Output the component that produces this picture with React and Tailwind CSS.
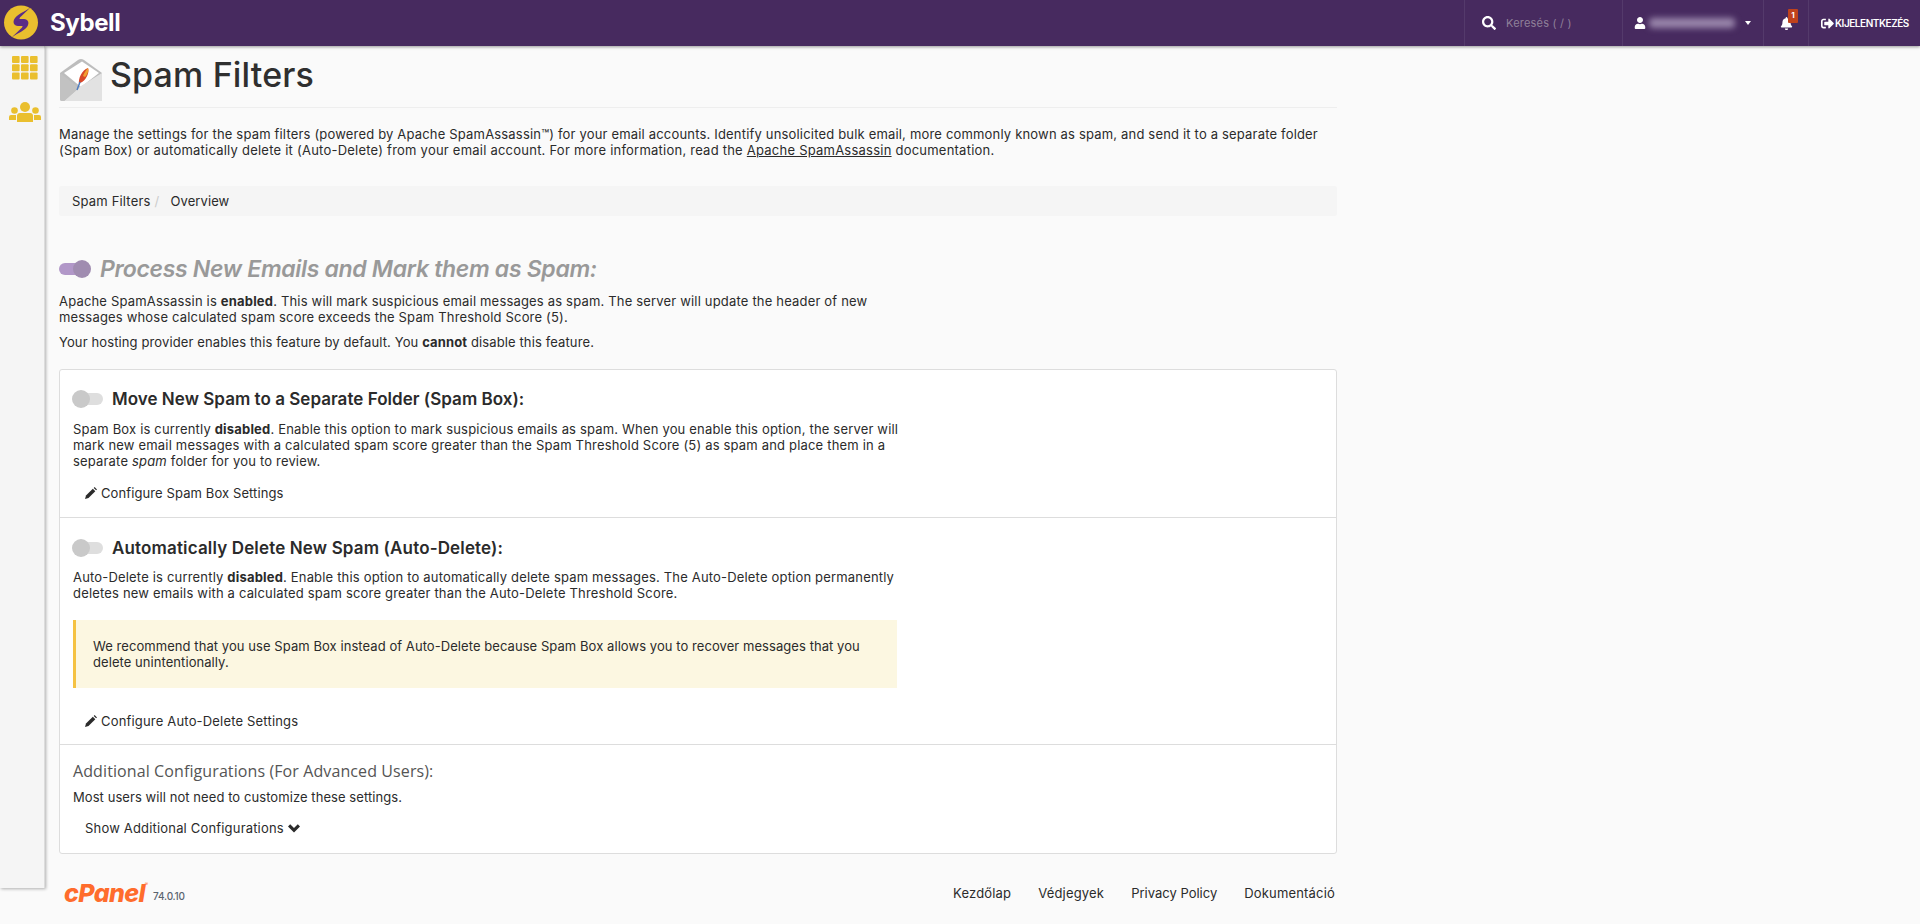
import React from "react";
import { FaSearch, FaUser, FaBell, FaSignOutAlt } from "react-icons/fa";

const P = "font-['Inter','Noto_Sans',sans-serif]";

function Toggle({ on }) {
  if (on) {
    return (
      <span className="relative inline-block w-[32px] h-[18px] shrink-0">
        <span className="absolute left-0 top-[3px] w-[28px] h-3 rounded-md bg-[#b197c8]" />
        <span className="absolute right-0 top-0 w-[18px] h-[18px] rounded-full bg-[#a08cb0]" />
      </span>
    );
  }
  return (
    <span className="relative inline-block w-[31px] h-[18px] shrink-0 -ml-[1px]">
      <span className="absolute right-0 top-[3px] w-[28px] h-3 rounded-md bg-[#dedede]" />
      <span className="absolute left-0 top-0 w-[18px] h-[18px] rounded-full bg-[#c9c9c9]" />
    </span>
  );
}

function Logo() {
  return (
    <svg width="42" height="46" viewBox="0 0 42 46" className="shrink-0">
      <circle cx="21" cy="22.5" r="17" fill="#eabf2e" />
      <path d="M32 6 C27 11 19 13 15 18 C12 22 14 26 18 26 L23 26 L27 20 L21 20 C19 20 19 18 21 16.5 Z" fill="#5b2d86" />
      <path d="M10 39 C15 34 23 32 27 27 C30 23 28 19 24 19 L19 19 L15 25 L21 25 C23 25 23 27 21 28.5 Z" fill="#5b2d86" />
    </svg>
  );
}

function EnvelopeIcon() {
  return (
    <svg width="44" height="44" viewBox="0 0 44 44" className="shrink-0">
      <path d="M1 15 L19 2 Q22 0 25 2 L43 15 L43 41 Q43 43 41 43 L3 43 Q1 43 1 41 Z" fill="#bdbdbd" />
      <path d="M5 15 L23 3.5 L40 15 L22 29 Z" fill="#ffffff" />
      <path d="M43 15 L43 43 L5 43 L22 28 Z" fill="#e2e2e2" />
      <path d="M1 15 L20 30 L5 43 L3 43 Q1 43 1 41 Z" fill="#c2c2c2" />
      <path d="M20 27 C19 20 23 12 29 10 C31 14 27 23 21 25 Z" fill="#d8482a" />
      <path d="M24 18 C25 15 27 12 29 10 C30 13 28 17 26 19 Z" fill="#f0a030" />
      <path d="M18 32 L21 24" stroke="#4a7ac0" strokeWidth="1.4" />
    </svg>
  );
}

function Pencil() {
  return (
    <svg width="12" height="12" viewBox="0 0 12 12" fill="#2b2b2b" className="shrink-0">
      <path d="M0 12 L1 8.5 L7.8 1.7 L10.3 4.2 L3.5 11 Z" />
      <path d="M8.7 0.9 L9.6 0 L12 2.4 L11.1 3.3 Z" />
    </svg>
  );
}

function Chevron() {
  return (
    <svg width="12" height="9" viewBox="0 0 12 9" fill="#2b2b2b" className="shrink-0">
      <path d="M0 2.4 L2.2 0.2 L6 4 L9.8 0.2 L12 2.4 L6 8.4 Z" />
    </svg>
  );
}

function GridIcon() {
  return (
    <svg width="26" height="24" viewBox="0 0 26 24" fill="#eabf2e">
      {[0, 1, 2].map((r) =>
        [0, 1, 2].map((c) => <rect key={`${r}${c}`} x={c * 9} y={r * 8.3} width="7.6" height="7" rx="1" />)
      )}
    </svg>
  );
}

function UsersIcon() {
  return (
    <svg width="32" height="20" viewBox="0 0 32 20" fill="#eabf2e">
      <circle cx="16" cy="5" r="5" />
      <path d="M8 20 L8 14 Q8 11 11 11 L21 11 Q24 11 24 14 L24 20 Z" />
      <circle cx="5.5" cy="8.5" r="3.3" />
      <path d="M0 18 L0 15 Q0 13 2 13 L7 13 L7 18 Z" />
      <circle cx="26.5" cy="8.5" r="3.3" />
      <path d="M25 13 L30 13 Q32 13 32 15 L32 18 L25 18 Z" />
    </svg>
  );
}

function CpanelLogo() {
  return (
    <span className="relative inline-block font-['Inter',sans-serif] italic font-extrabold text-[25px] leading-[26px] tracking-[-0.6px] text-[#ff6c2c]">
      cPanel
      <span className="absolute -right-[3px] top-[2px] text-[5px] leading-[5px] not-italic font-normal tracking-normal">®</span>
    </span>
  );
}

export default function App() {
  return (
    <div className={`${P} min-h-[924px] bg-[#fafafa] text-[13px] leading-[16px] tracking-[0.18px] text-[#2b2b2b] flex flex-col`}>
      <header className="h-[46px] shrink-0 bg-[#472a5f] shadow-[0_1px_3px_rgba(0,0,0,0.4)] flex items-center relative z-10">
        <div className="flex items-center gap-[8px]">
          <Logo />
          <span className="font-bold text-[24px] leading-none text-white tracking-[-0.4px]">Sybell</span>
        </div>
        <div className="ml-auto flex h-full">
          <div className="w-[158px] border-l border-[#543a6b] flex items-center pl-[17px] gap-[10px]">
            <FaSearch className="text-white text-[14px]" />
            <span className="text-[#8f8099] text-[11px] tracking-[0.2px]">Keresés ( / )</span>
          </div>
          <div className="w-[141px] border-l border-[#543a6b] flex items-center pl-[11px]">
            <FaUser className="text-white text-[12px]" />
            <span className="w-[86px] h-[10px] ml-[3px] rounded-sm bg-[#9a87ac] blur-[3px]" />
            <span className="ml-[10px] border-x-[3.5px] border-x-transparent border-t-[4px] border-t-white" />
          </div>
          <div className="w-[45px] border-l border-[#543a6b] flex items-center justify-center relative">
            <FaBell className="text-white text-[13px]" />
            <span className="absolute left-[24px] top-[9px] w-[10px] h-[14px] rounded-[1px] bg-[#c0421c] text-white text-[8px] font-bold leading-[12px] tracking-normal text-center">1</span>
          </div>
          <div className="w-[112px] border-l border-[#543a6b] flex items-center pl-[12px] gap-[1px]">
            <FaSignOutAlt className="text-white text-[13px]" />
            <span className="text-white text-[10px] font-semibold tracking-[-0.45px]">KIJELENTKEZÉS</span>
          </div>
        </div>
      </header>

      <div className="flex flex-1">
        <aside className="w-[45px] h-[842px] shrink-0 bg-[#f5f5f5] border-r border-[#dcdcdc] shadow-[1px_1px_3px_rgba(0,0,0,0.3)] flex flex-col items-center pt-[10px] pl-[5px] gap-[22px]">
          <GridIcon />
          <UsersIcon />
        </aside>

        <main className="w-[1278px] ml-[14px]">
          <div className="flex items-center gap-[7px] h-[62px] pt-[7px] border-b border-[#eeeeee]">
            <EnvelopeIcon />
            <h1 className="font-medium text-[34px] leading-none -mt-[10px] tracking-[0.15px] text-[#2f2f2f]">Spam Filters</h1>
          </div>

          <p className="mt-[18px]">
            Manage the settings for the spam filters (powered by Apache SpamAssassin™) for your email accounts. Identify unsolicited bulk email, more commonly known as spam, and send it to a separate folder
            <br />
            <span className="tracking-[0.23px]">(Spam Box) or automatically delete it (Auto-Delete) from your email account. For more information, read the <u>Apache SpamAssassin</u> documentation.</span>
          </p>

          <nav className="mt-[28px] h-[30px] bg-[#f5f5f5] rounded-[3px] px-[13px] flex items-center">
            <span>Spam Filters</span>
            <span className="text-[#cccccc] ml-[4px] mr-[11px]">/</span>
            <span className="tracking-[0.1px]">Overview</span>
          </nav>

          <div className="mt-[41px] flex items-center gap-[9px] h-[24px]">
            <Toggle on />
            <h2 className="italic font-semibold text-[23px] tracking-[-0.32px] text-[#999999]">Process New Emails and Mark them as Spam:</h2>
          </div>

          <p className="mt-[12px] w-[845px]">
            Apache SpamAssassin is <b>enabled</b>. This will mark suspicious email messages as spam. The server will update the header of new messages whose calculated spam score exceeds the Spam Threshold Score (5).
          </p>
          <p className="mt-[9px] tracking-[0.12px]">
            Your hosting provider enables this feature by default. You <b>cannot</b> disable this feature.
          </p>

          <section className="mt-[19px] bg-white border border-[#dddddd] rounded-[3px]">
            <div className="h-[148px] px-[13px] pt-[19px] border-b border-[#dddddd]">
              <div className="flex items-center gap-[9px] h-[20px]">
                <Toggle />
                <h3 className="font-semibold text-[17px] tracking-[0.03px]">Move New Spam to a Separate Folder (Spam Box):</h3>
              </div>
              <p className="mt-[12px] w-[826px]">
                Spam Box is currently <b>disabled</b>. Enable this option to mark suspicious emails as spam. When you enable this option, the server will mark new email messages with a calculated spam score greater than the Spam Threshold Score (5) as spam and place them in a separate <i>spam</i> folder for you to review.
              </p>
              <div className="mt-[16px] ml-[12px] flex items-center gap-[4px]">
                <Pencil />
                <span className="tracking-[0.1px]">Configure Spam Box Settings</span>
              </div>
            </div>

            <div className="h-[227px] px-[13px] pt-[20px] border-b border-[#dddddd]">
              <div className="flex items-center gap-[9px] h-[20px]">
                <Toggle />
                <h3 className="font-semibold text-[17px] tracking-[0.15px]">Automatically Delete New Spam (Auto-Delete):</h3>
              </div>
              <p className="mt-[11px] w-[826px]">
                Auto-Delete is currently <b>disabled</b>. Enable this option to automatically delete spam messages. The Auto-Delete option permanently deletes new emails with a calculated spam score greater than the Auto-Delete Threshold Score.
              </p>
              <div className="mt-[19px] w-[824px] h-[68px] bg-[#fcf7e1] border-l-[3px] border-[#f5c242] pl-[17px] pr-[16px] flex items-center">
                <p className="tracking-[0.065px]">We recommend that you use Spam Box instead of Auto-Delete because Spam Box allows you to recover messages that you delete unintentionally.</p>
              </div>
              <div className="mt-[25px] ml-[12px] flex items-center gap-[4px]">
                <Pencil />
                <span>Configure Auto-Delete Settings</span>
              </div>
            </div>

            <div className="h-[108px] px-[13px] pt-[16px]">
              <h4 className="font-['Open_Sans',sans-serif] text-[16px] leading-[20px] tracking-[0.1px] text-[#555555]">Additional Configurations (For Advanced Users):</h4>
              <p className="mt-[8px] tracking-[0.07px]">Most users will not need to customize these settings.</p>
              <div className="mt-[15px] ml-[12px] flex items-center gap-[4px]">
                <span>Show Additional Configurations</span>
                <Chevron />
              </div>
            </div>
          </section>

          <footer className="mt-[25px] h-[28px] flex items-center justify-between">
            <div className="flex items-center gap-[8px] pl-[5px]">
              <CpanelLogo />
              <span className="text-[10px] font-medium text-[#5a6470] tracking-[-0.2px] mt-[6px]">74.0.10</span>
            </div>
            <div className="flex gap-[27px] pr-[2px]">
              <span>Kezdőlap</span>
              <span>Védjegyek</span>
              <span className="tracking-[0px]">Privacy Policy</span>
              <span>Dokumentáció</span>
            </div>
          </footer>
        </main>
      </div>
    </div>
  );
}
